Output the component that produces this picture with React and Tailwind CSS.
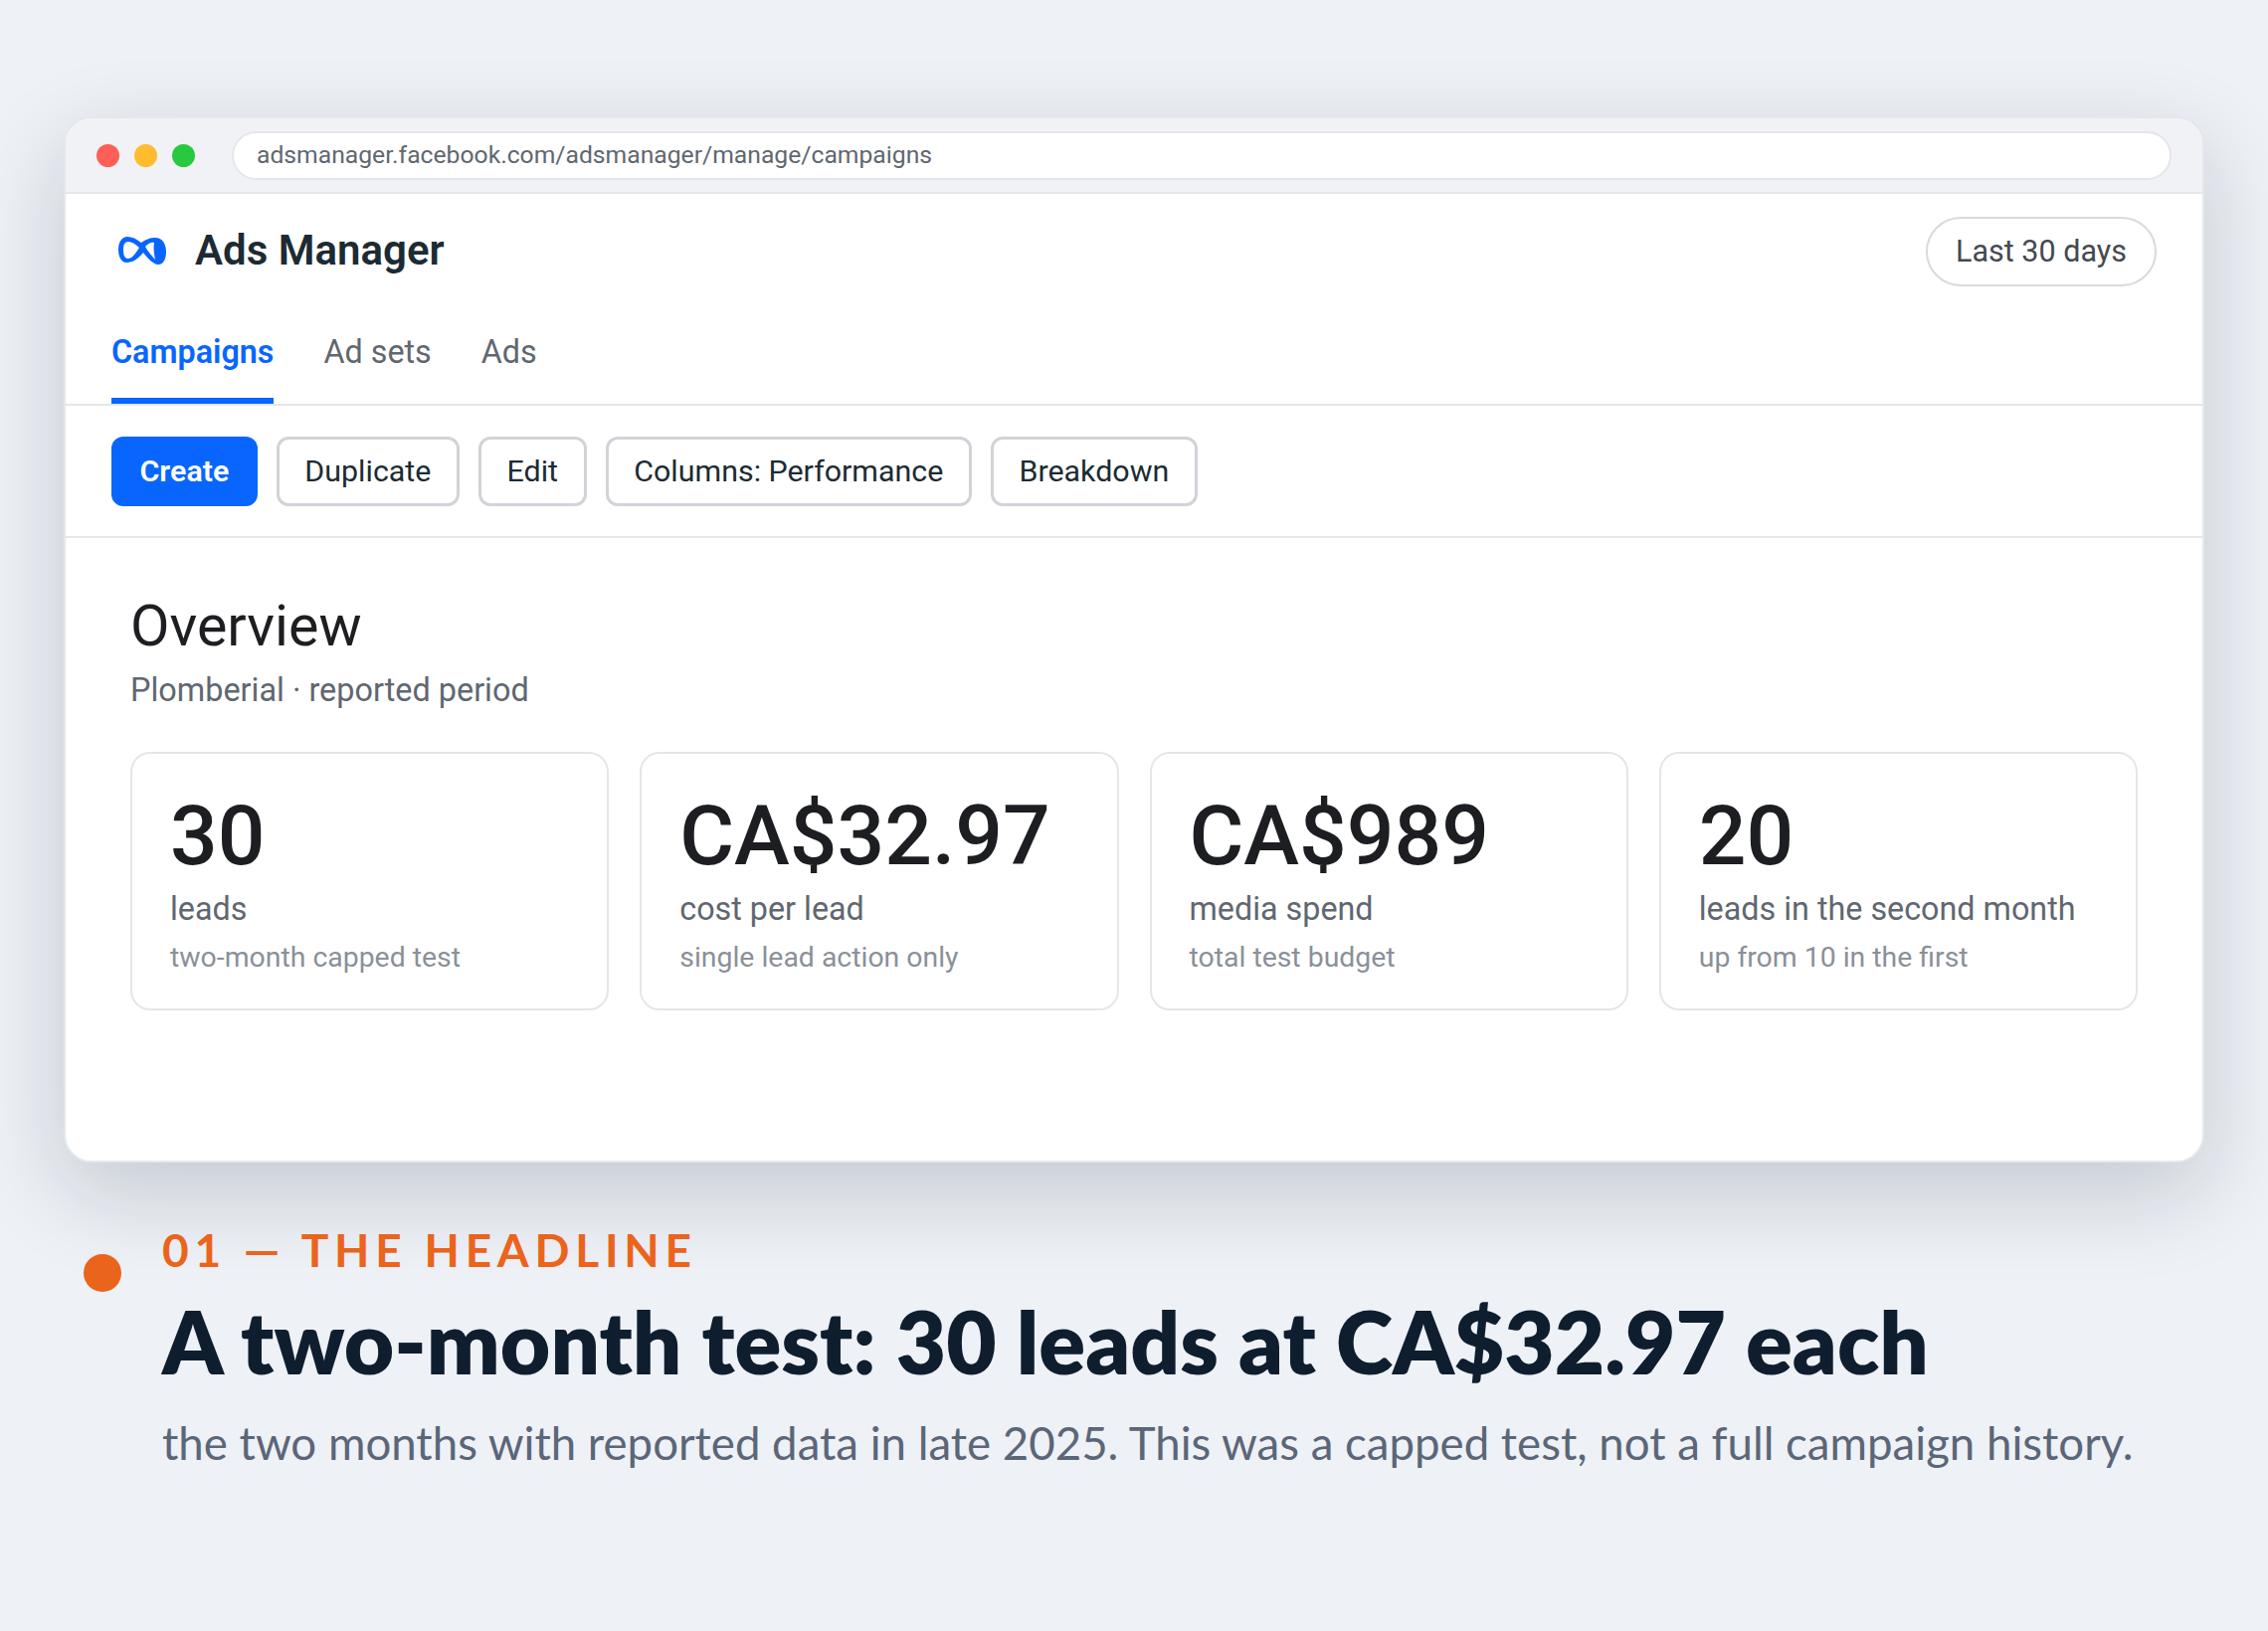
const tabs = ['Ad sets', 'Ads']
const buttons = ['Duplicate', 'Edit', 'Columns: Performance', 'Breakdown']
const stats = [
  { value: '30', label: 'leads', note: 'two-month capped test' },
  { value: 'CA$32.97', label: 'cost per lead', note: 'single lead action only' },
  { value: 'CA$989', label: 'media spend', note: 'total test budget' },
  { value: '20', label: 'leads in the second month', note: 'up from 10 in the first' },
]

function MetaLogo() {
  return (
    <svg viewBox="0 0 48 28" className="h-[28px] w-[48px]">
      <path
        fill="#0866ff"
        fillRule="evenodd"
        d="M9 0C14 0 18 2 23 6C27 3 31 1 37 1C44 1 48 7 48 15C48 23 45 28 40 28C35 28 29 21 25 16C20 22 15 26 8 26C3 26 0 20 0 13C0 5 4 0 9 0ZM10 5C6 5 5 9 5 13C5 18 6 22 10 22C14 22 18 16 21 11C17 7 13 5 10 5ZM27 10C30 15 34 20 37 23C36 18 35 12 36 6C33 5 30 7 27 10Z"
      />
    </svg>
  )
}

export default function App() {
  return (
    <div className="min-h-[1640px] bg-[#eef1f6] px-[64px] pt-[117px] font-['Roboto',sans-serif]">
      <div className="flex h-[1052px] flex-col overflow-hidden rounded-[28px] border-2 border-[#e4e7ec] bg-white shadow-[0_30px_90px_rgba(15,30,46,0.19)]">
        {/* browser bar */}
        <div className="flex h-[76px] shrink-0 items-center gap-[15px] border-b-2 border-[#e4e6eb] bg-[#f0f2f5] pl-[31px] pr-[31px]">
          <span className="h-[23px] w-[23px] rounded-full bg-[#ff5f57]" />
          <span className="h-[23px] w-[23px] rounded-full bg-[#febc2e]" />
          <span className="h-[23px] w-[23px] rounded-full bg-[#28c840]" />
          <div className="ml-[22px] flex h-[49px] flex-1 items-center rounded-full border-2 border-[#e4e6eb] bg-white pl-[23px] text-[24.7px] text-[#606770]">
            adsmanager.facebook.com/adsmanager/manage/campaigns
          </div>
        </div>

        {/* header */}
        <div className="flex h-[115px] shrink-0 items-center justify-between pl-[53px] pr-[46px]">
          <div className="mb-[2px] flex items-center gap-[29px]">
            <MetaLogo />
            <span className="text-[42px] font-semibold text-[#1c2b33]">Ads Manager</span>
          </div>
          <div className="flex h-[70px] w-[232px] items-center justify-center rounded-full border-2 border-[#d8dadf] text-[30.5px] text-[#444950]">
            Last 30 days
          </div>
        </div>

        {/* tabs */}
        <div className="flex h-[98px] shrink-0 gap-[50px] border-b-2 border-[#e4e6eb] pl-[46px] text-[32.3px]">
          <div className="h-[96px] border-b-[6px] border-[#0866ff] pt-[20px] font-semibold text-[#0866ff]">Campaigns</div>
          {tabs.map(t => (
            <div key={t} className="pt-[20px] text-[#606770]">{t}</div>
          ))}
        </div>

        {/* toolbar */}
        <div className="flex h-[133px] shrink-0 items-center gap-[19px] border-b-2 border-[#e4e6eb] pl-[46px]">
          <button className="flex h-[70px] items-center rounded-[12px] bg-[#0866ff] px-[28.5px] text-[30.4px] font-semibold text-white">Create</button>
          {buttons.map(b => (
            <button key={b} className="flex h-[70px] items-center rounded-[12px] border-[3px] border-[#d0d3d8] px-[25.6px] text-[30.4px] text-[#1c2b33]">{b}</button>
          ))}
        </div>

        {/* overview */}
        <div className="px-[65px] pt-[55px]">
          <h2 className="text-[57.4px] leading-[68px] text-[#1c1e21]">Overview</h2>
          <p className="mt-[8px] text-[32.4px] leading-[44px] text-[#606770]">Plomberial · reported period</p>
          <div className="mt-[40px] grid grid-cols-4 gap-[31px]">
            {stats.map(s => (
              <div key={s.label} className="h-[260px] rounded-[20px] border-2 border-[#e4e6eb] px-[38px] pt-[35px]">
                <div className="text-[84px] font-medium leading-[96px] text-[#1c1e21]">{s.value}</div>
                <div className="mt-[3px] text-[32.3px] leading-[44px] text-[#606770]">{s.label}</div>
                <div className="mt-[7px] text-[28.4px] leading-[40px] text-[#8a9099]">{s.note}</div>
              </div>
            ))}
          </div>
        </div>
      </div>

      {/* caption */}
      <div className="ml-[20px] mt-[60px] flex items-start gap-[41px] font-['Lato',sans-serif]">
        <span className="mt-[32px] h-[38px] w-[38px] shrink-0 rounded-full bg-[#ea641c]" />
        <div>
          <div className="text-[46px] font-bold leading-[56px] tracking-[5.75px] text-[#ea641c]">01 — THE HEADLINE</div>
          <div className="mt-[11px] whitespace-nowrap text-[87px] font-extrabold leading-[106px] text-[#0f1e2e]">A two-month test: 30 leads at CA$32.97 each</div>
          <div className="mt-[19px] whitespace-nowrap text-[45.6px] leading-[60px] text-[#5b6678]">the two months with reported data in late 2025. This was a capped test, not a full campaign history.</div>
        </div>
      </div>
    </div>
  )
}
